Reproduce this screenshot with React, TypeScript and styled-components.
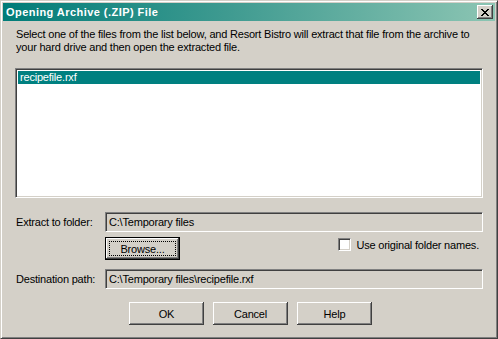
import React, { useState } from 'react'
import styled, { createGlobalStyle } from 'styled-components'

const FACE = '#d4d0c8'
const SHADOW = '#808080'
const DARK = '#404040'

const GlobalStyle = createGlobalStyle`
  html, body {
    margin: 0;
    padding: 0;
    background: ${FACE};
  }
  * {
    box-sizing: border-box;
  }
`

const Window = styled.div`
  width: 498px;
  height: 339px;
  display: flex;
  flex-direction: column;
  background: ${FACE};
  border: 1px solid;
  border-color: ${FACE} ${DARK} ${DARK} ${FACE};
  box-shadow: inset 1px 1px #fff, inset -1px -1px ${SHADOW};
  padding: 2px;
  font-family: 'Liberation Sans', Arial, sans-serif;
  font-size: 11px;
  letter-spacing: -0.2px;
  color: #000;
`

const TitleBar = styled.div`
  height: 18px;
  display: flex;
  align-items: center;
  justify-content: space-between;
  padding: 0 2px 0 3px;
  background: linear-gradient(to right, #007c78 0%, #3e9a90 45%, #8cc5b3 100%);
`

const Title = styled.span`
  color: #fff;
  font-weight: bold;
  font-family: 'Liberation Sans', Arial, sans-serif;
  font-size: 11px;
  letter-spacing: 0.45px;
`

const CloseButton = styled.button`
  width: 16px;
  height: 14px;
  padding: 0;
  border: none;
  background: ${FACE};
  display: flex;
  align-items: center;
  justify-content: center;
  box-shadow: inset -1px -1px ${DARK}, inset 1px 1px #fff, inset -2px -2px ${SHADOW}, inset 2px 2px ${FACE};
`

const Body = styled.div`
  flex: 1;
  display: flex;
  flex-direction: column;
  padding: 7px 12px 0 12px;
`

const Intro = styled.p`
  margin: 0;
  padding-left: 1px;
  line-height: 13px;
  height: 26px;
  white-space: nowrap;
`

const ListBox = styled.div`
  margin-top: 14px;
  height: 130px;
  background: #fff;
  border: 1px solid;
  border-color: ${SHADOW} #fff #fff ${SHADOW};
  box-shadow: inset 1px 1px ${DARK}, inset -1px -1px ${FACE};
  padding: 2px;
`

const ListItem = styled.div<{ $selected?: boolean }>`
  height: 13px;
  line-height: 13px;
  padding-left: 2px;
  background: ${({ $selected }) => ($selected ? '#008080' : 'transparent')};
  color: ${({ $selected }) => ($selected ? '#fff' : '#000')};
`

const Form = styled.div`
  margin-top: 14px;
  display: flex;
  flex-direction: column;
`

const FieldRow = styled.div<{ $top?: number }>`
  display: grid;
  grid-template-columns: 90px 1fr;
  align-items: center;
  margin-top: ${({ $top }) => $top ?? 0}px;
`

const Label = styled.span`
  padding-left: 1px;
`

const Field = styled.div`
  height: 20px;
  line-height: 16px;
  padding: 1px 3px;
  white-space: nowrap;
  overflow: hidden;
  background: ${FACE};
  border: 1px solid;
  border-color: ${SHADOW} #fff #fff ${SHADOW};
  box-shadow: inset 1px 1px ${DARK}, inset -1px -1px ${FACE};
`

const BrowseLine = styled.div`
  display: flex;
  justify-content: space-between;
  align-items: flex-start;
  padding-right: 4px;
`

const Button = styled.button<{ $default?: boolean }>`
  width: 75px;
  height: 23px;
  padding: ${({ $default }) => ($default ? '3px' : '0')};
  display: flex;
  align-items: stretch;
  justify-content: center;
  background: ${FACE};
  font-family: 'Liberation Sans', Arial, sans-serif;
  font-size: 11px;
  letter-spacing: -0.2px;
  color: #000;
  border: ${({ $default }) => ($default ? '1px solid #000' : 'none')};
  box-shadow: inset -1px -1px ${DARK}, inset 1px 1px #fff, inset -2px -2px ${SHADOW}, inset 2px 2px ${FACE};
`

const ButtonText = styled.span<{ $focus?: boolean }>`
  flex: 1;
  display: flex;
  align-items: center;
  justify-content: center;
  border: 1px dotted ${({ $focus }) => ($focus ? '#000' : 'transparent')};
`

const CheckLabel = styled.label`
  display: flex;
  align-items: center;
  gap: 5px;
  margin-top: 1px;
  height: 13px;
`

const CheckBox = styled.span<{ $checked?: boolean }>`
  width: 13px;
  height: 13px;
  background: #fff;
  border: 1px solid;
  border-color: ${SHADOW} #fff #fff ${SHADOW};
  box-shadow: inset 1px 1px ${DARK}, inset -1px -1px ${FACE};
`

const Actions = styled.div`
  margin-top: 13px;
  display: flex;
  justify-content: center;
  gap: 9px;
  padding-left: 3px;
`

const CloseGlyph = () => (
  <svg width="8" height="7" viewBox="0 0 8 7" shapeRendering="crispEdges">
    <path
      fill="#000"
      d="M0 0h2v1H0zM6 0h2v1H6zM1 1h2v1H1zM5 1h2v1H5zM2 2h4v1H2zM3 3h2v1H3zM2 4h4v1H2zM1 5h2v1H1zM5 5h2v1H5zM0 6h2v1H0zM6 6h2v1H6z"
    />
  </svg>
)

const App = () => {
  const [useOriginal, setUseOriginal] = useState(false)
  const folder = 'C:\\Temporary files'
  const file = 'recipefile.rxf'

  return (
    <>
      <GlobalStyle />
      <Window>
        <TitleBar>
          <Title>Opening Archive (.ZIP) File</Title>
          <CloseButton aria-label="Close">
            <CloseGlyph />
          </CloseButton>
        </TitleBar>
        <Body>
          <Intro>
            Select one of the files from the list below, and Resort Bistro will extract that file from the archive to
            <br />
            your hard drive and then open the extracted file.
          </Intro>
          <ListBox>
            <ListItem $selected>{file}</ListItem>
          </ListBox>
          <Form>
            <FieldRow>
              <Label>Extract to folder:</Label>
              <Field>{folder}</Field>
            </FieldRow>
            <FieldRow $top={5}>
              <span />
              <BrowseLine>
                <Button $default>
                  <ButtonText $focus>Browse...</ButtonText>
                </Button>
                <CheckLabel onClick={() => setUseOriginal(!useOriginal)}>
                  <CheckBox $checked={useOriginal} />
                  Use original folder names.
                </CheckLabel>
              </BrowseLine>
            </FieldRow>
            <FieldRow $top={9}>
              <Label>Destination path:</Label>
              <Field>{`${folder}\\${file}`}</Field>
            </FieldRow>
          </Form>
          <Actions>
            <Button>
              <ButtonText>OK</ButtonText>
            </Button>
            <Button>
              <ButtonText>Cancel</ButtonText>
            </Button>
            <Button>
              <ButtonText>Help</ButtonText>
            </Button>
          </Actions>
        </Body>
      </Window>
    </>
  )
}

export default App
